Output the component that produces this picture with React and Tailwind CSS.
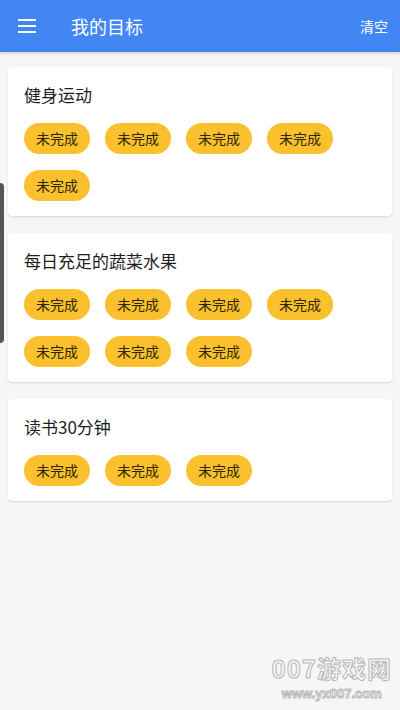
import React from "react";

const goals = [
  { title: "健身运动", count: 5 },
  { title: "每日充足的蔬菜水果", count: 7 },
  { title: "读书30分钟", count: 3 },
];

function MenuIcon() {
  return (
    <svg width="18" height="14" viewBox="0 0 18 14" className="block">
      <rect x="0" y="0" width="18" height="2" fill="white" />
      <rect x="0" y="6" width="18" height="2" fill="white" />
      <rect x="0" y="12" width="18" height="2" fill="white" />
    </svg>
  );
}

function GoalCard({ title, count }) {
  return (
    <div className="bg-white rounded shadow-[0_1px_2px_rgba(0,0,0,0.12)] px-4 pt-[15px] pb-[15px]">
      <div className="text-[17px] leading-[26px] text-[#1e1e1e]">{title}</div>
      <div className="mt-[15px] flex flex-wrap gap-x-[15px] gap-y-[16px]">
        {Array.from({ length: count }).map((_, i) => (
          <div
            key={i}
            className="w-[66px] h-[31px] rounded-full bg-[#fbc02d] flex items-center justify-center text-[14px] text-[#2e2500]"
          >
            未完成
          </div>
        ))}
      </div>
    </div>
  );
}

export default function App() {
  return (
    <div
      className="relative w-[400px] h-[710px] bg-[#f6f6f6] overflow-hidden"
      style={{ fontFamily: '"Noto Sans CJK SC", "Noto Sans", sans-serif' }}
    >
      <div className="h-[52px] bg-[#4286f3] flex items-center px-[18px] shadow-[0_1px_3px_rgba(0,0,0,0.2)]">
        <MenuIcon />
        <span className="ml-[35px] text-[18px] text-white">我的目标</span>
        <span className="ml-auto mr-[-6px] text-[14px] text-white">清空</span>
      </div>

      <div className="px-2 pt-[15px] flex flex-col gap-[17px]">
        {goals.map((g) => (
          <GoalCard key={g.title} title={g.title} count={g.count} />
        ))}
      </div>

      <div className="absolute left-0 top-[183px] w-[4px] h-[160px] bg-[#555] rounded-r" />

      <div className="absolute right-[8px] bottom-[9px] flex flex-col items-center gap-[6px] text-transparent [-webkit-text-stroke:1px_#b8b8b8]">
        <span className="text-[24px] leading-[24px] font-bold tracking-[1px]">007游戏网</span>
        <span className="text-[13px] leading-[15px] font-bold font-['Liberation_Sans',sans-serif]">
          www.yx007.com
        </span>
      </div>
    </div>
  );
}
